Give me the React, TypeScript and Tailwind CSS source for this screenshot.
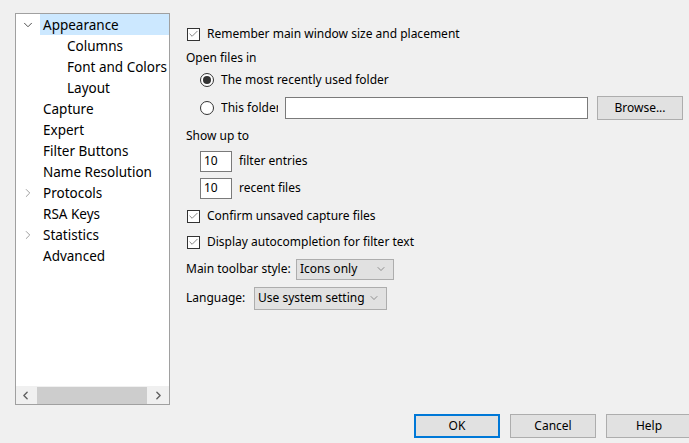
import { ChevronDown, ChevronRight, ChevronLeft, Check } from "lucide-react";

const font = { fontFamily: '"Noto Sans", "Open Sans", sans-serif' };

type Node = { label: string; depth: number; toggle?: "open" | "closed"; selected?: boolean };

const tree: Node[] = [
  { label: "Appearance", depth: 0, toggle: "open", selected: true },
  { label: "Columns", depth: 1 },
  { label: "Font and Colors", depth: 1 },
  { label: "Layout", depth: 1 },
  { label: "Capture", depth: 0 },
  { label: "Expert", depth: 0 },
  { label: "Filter Buttons", depth: 0 },
  { label: "Name Resolution", depth: 0 },
  { label: "Protocols", depth: 0, toggle: "closed" },
  { label: "RSA Keys", depth: 0 },
  { label: "Statistics", depth: 0, toggle: "closed" },
  { label: "Advanced", depth: 0 },
];

function CheckBox({ label }: { label: string }) {
  return (
    <div className="flex items-center h-[22px]">
      <span className="ml-[1px] w-[13px] h-[13px] border border-[#333] bg-white flex items-center justify-center">
        <Check size={12} strokeWidth={1.3} className="text-[#333]" />
      </span>
      <span className="ml-[7px] whitespace-nowrap">{label}</span>
    </div>
  );
}

function Radio({ on }: { on?: boolean }) {
  return (
    <span className="w-[14px] h-[14px] rounded-full border border-[#333] bg-white flex items-center justify-center shrink-0">
      {on && <span className="w-[8px] h-[8px] rounded-full bg-[#333]" />}
    </span>
  );
}

function SpinBox({ value }: { value: string }) {
  return (
    <span className="w-[32px] h-[21px] border border-[#7a7a7a] bg-white flex items-center pl-[3px]">{value}</span>
  );
}

function Combo({ text, w, h }: { text: string; w: string; h: string }) {
  return (
    <span className={`${w} ${h} border border-[#adadad] bg-[#e1e1e1] flex items-center justify-between pl-[3px] pr-[6px] whitespace-nowrap`}>
      {text}
      <ChevronDown size={12} strokeWidth={1.2} className="text-[#555]" />
    </span>
  );
}

function Button({ label, isDefault }: { label: string; isDefault?: boolean }) {
  return (
    <button
      className={`w-[86px] h-[24px] shrink-0 bg-[#e1e1e1] flex items-center justify-center text-[12px] ${
        isDefault ? "border-2 border-[#0078d7]" : "border border-[#adadad]"
      }`}
    >
      {label}
    </button>
  );
}

export default function App() {
  return (
    <div className="w-[689px] h-[443px] bg-[#f0f0f0] text-[12px] text-black overflow-hidden flex flex-col" style={font}>
      <div className="flex">
        {/* preference tree */}
        <div className="ml-[15px] mt-[13px] w-[155px] h-[392px] border border-[#a0a0a0] bg-white flex flex-col text-[13.5px]">
          <div className="flex-1">
            {tree.map((n) => (
              <div key={n.label} className="flex h-[21px] items-center">
                <span className="w-[24px] flex justify-center">
                  {n.toggle === "open" && <ChevronDown size={14} strokeWidth={1.6} className="text-[#444]" />}
                  {n.toggle === "closed" && <ChevronRight size={14} strokeWidth={1.6} className="text-[#999]" />}
                </span>
                <span
                  className={`h-[21px] flex items-center pt-[1px] whitespace-nowrap flex-1 ${n.depth ? "pl-[27px]" : "pl-[3px]"} ${
                    n.selected ? "bg-[#cce8ff]" : ""
                  }`}
                >
                  {n.label}
                </span>
              </div>
            ))}
          </div>
          <div className="h-[18px] flex items-center bg-[#f0f0f0]">
            <span className="w-[18px] flex justify-center">
              <ChevronLeft size={13} strokeWidth={2.6} className="text-[#606060]" />
            </span>
            <span className="ml-[3px] w-[110px] h-[17px] bg-[#cdcdcd]" />
            <span className="flex-1 flex justify-center">
              <ChevronRight size={13} strokeWidth={2.6} className="text-[#606060]" />
            </span>
          </div>
        </div>

        {/* settings pane */}
        <div className="ml-[16px] mt-[23px] w-[499px] flex flex-col">
          <CheckBox label="Remember main window size and placement" />
          <div className="mt-[2px] h-[22px] flex items-center">Open files in</div>
          <div className="h-[22px] flex items-center pl-[14px]">
            <Radio on />
            <span className="ml-[7px]">The most recently used folder</span>
          </div>
          <div className="mt-[4px] h-[26px] flex items-center pl-[14px]">
            <Radio />
            <span className="ml-[7px] w-[57px] overflow-hidden whitespace-nowrap">This folder</span>
            <span className="ml-[7px] w-[303px] h-[22px] border border-[#7a7a7a] bg-white" />
            <span className="ml-[9px]">
              <Button label="Browse..." />
            </span>
          </div>
          <div className="mt-[4px] h-[22px] flex items-center">Show up to</div>
          <div className="mt-[3px] h-[22px] flex items-center pl-[14px]">
            <SpinBox value="10" />
            <span className="ml-[7px]">filter entries</span>
          </div>
          <div className="mt-[5px] h-[22px] flex items-center pl-[14px]">
            <SpinBox value="10" />
            <span className="ml-[7px]">recent files</span>
          </div>
          <div className="mt-[6px]">
            <CheckBox label="Confirm unsaved capture files" />
          </div>
          <div className="mt-[4px]">
            <CheckBox label="Display autocompletion for filter text" />
          </div>
          <div className="mt-[4px] h-[24px] flex items-center">
            <span className="w-[110px] whitespace-nowrap">Main toolbar style:</span>
            <Combo text="Icons only" w="w-[98px]" h="h-[21px]" />
          </div>
          <div className="mt-[5px] h-[24px] flex items-center">
            <span className="w-[68px]">Language:</span>
            <Combo text="Use system setting" w="w-[133px]" h="h-[23px]" />
          </div>
        </div>
      </div>

      {/* dialog buttons */}
      <div className="mt-[9px] ml-[414px] flex gap-[10px]">
        <Button label="OK" isDefault />
        <Button label="Cancel" />
        <Button label="Help" />
      </div>
    </div>
  );
}
